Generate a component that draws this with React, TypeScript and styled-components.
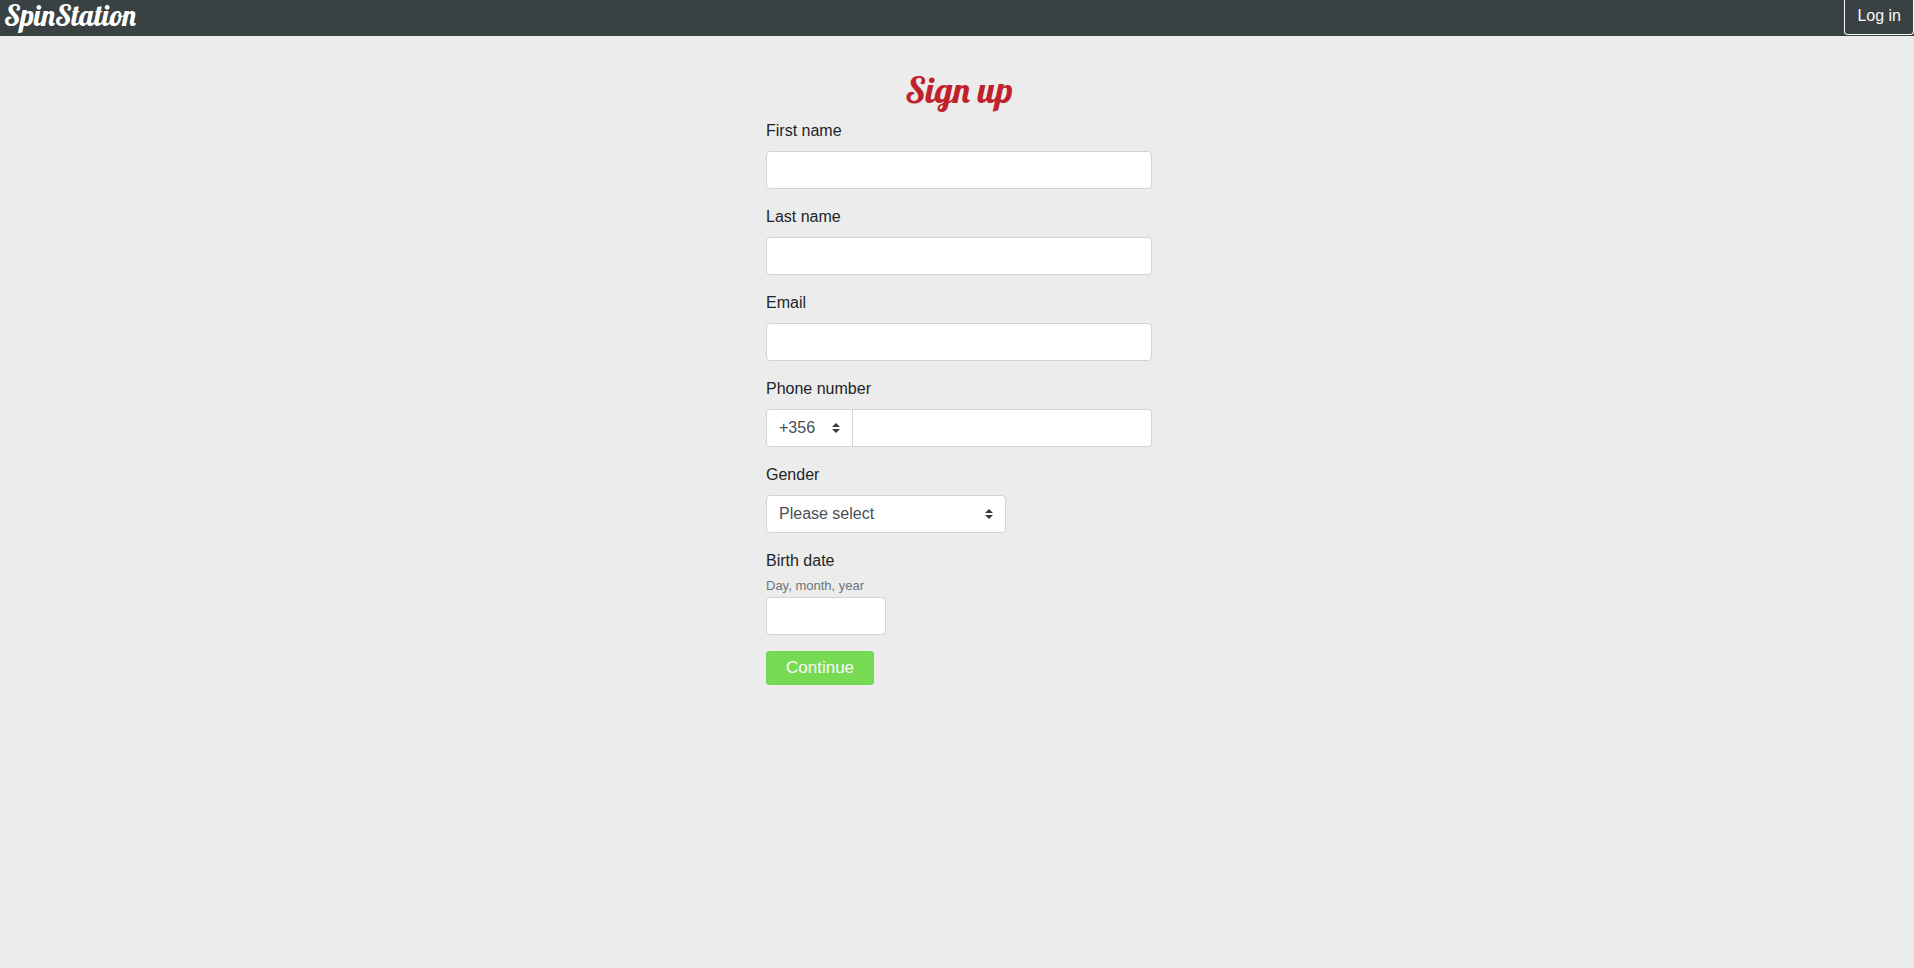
import React from "react";
import styled, { createGlobalStyle } from "styled-components";

const GlobalStyle = createGlobalStyle`
  *, *::before, *::after { box-sizing: border-box; }
  body {
    margin: 0;
    background: #ececec;
    color: #212529;
    font: 16px/24px "Liberation Sans", Arial, sans-serif;
  }
`;

const displayFont = `Lobster, "Liberation Serif", serif`;

const Header = styled.header`
  display: flex;
  justify-content: space-between;
  align-items: flex-start;
  height: 36px;
  padding-left: 4px;
  background: #394143;
`;

const Brand = styled.a`
  color: #fff;
  font: 29px/30px ${displayFont};
  text-decoration: none;
`;

const LoginButton = styled.button`
  height: 35px;
  padding: 4px 12px 6px;
  border: 1px solid #f8f9fa;
  border-top: 0;
  border-radius: 0 0 4px 4px;
  background: transparent;
  color: #f8f9fa;
  font: inherit;
  cursor: pointer;
`;

const Main = styled.main`
  padding: 32px 0 32px 4px;
`;

const Form = styled.form`
  width: 100%;
  max-width: 386px;
  margin: 0 auto;
`;

const Title = styled.h1`
  margin: 0 0 8px;
  color: #c0212a;
  font: 36px/43px ${displayFont};
  text-align: center;
`;

const Field = styled.div`
  margin-bottom: 16px;
`;

const Label = styled.label<{ $tight?: boolean }>`
  display: block;
  margin-bottom: ${(p) => (p.$tight ? 0 : 8)}px;
`;

const Hint = styled.small`
  color: #6c757d;
  font-size: 13px;
  line-height: 20px;
`;

const Input = styled.input<{ $width?: string }>`
  display: block;
  width: ${(p) => p.$width ?? "100%"};
  height: 38px;
  padding: 6px 12px;
  border: 1px solid #ced4da;
  border-radius: 4px;
  background: #fff;
  color: #495057;
  font: inherit;
`;

const SelectBox = styled.div<{ $width: number }>`
  display: grid;
  flex: none;
  width: ${(p) => p.$width}px;

  > * { grid-area: 1 / 1; }
`;

const Select = styled.select`
  appearance: none;
  width: 100%;
  height: 38px;
  padding: 6px 28px 6px 12px;
  border: 1px solid #ced4da;
  border-radius: 4px;
  background: #fff;
  color: #495057;
  font: inherit;
`;

const Arrows = styled.svg`
  align-self: center;
  justify-self: end;
  width: 8px;
  height: 10px;
  margin-right: 13px;
  fill: #343a40;
  pointer-events: none;
`;

const PhoneGroup = styled.div`
  display: flex;

  ${Select} { border-radius: 4px 0 0 4px; }
  ${Input} {
    flex: 1;
    min-width: 0;
    margin-left: -1px;
    border-radius: 0 4px 4px 0;
  }
`;

const SubmitButton = styled.button`
  height: 34px;
  padding: 0 20px;
  border: 0;
  border-radius: 3px;
  background: #77da53;
  color: #f8f9fa;
  font: inherit;
  font-size: 17px;
  cursor: pointer;
`;

function UpDown() {
  return (
    <Arrows viewBox="0 0 4 5" aria-hidden="true">
      <path d="M2 0L0 2h4zm0 5L0 3h4z" />
    </Arrows>
  );
}

const nameFields = [
  { id: "first-name", label: "First name", type: "text" },
  { id: "last-name", label: "Last name", type: "text" },
  { id: "email", label: "Email", type: "email" },
];

export default function App() {
  return (
    <>
      <GlobalStyle />
      <Header>
        <Brand href="#">SpinStation</Brand>
        <LoginButton type="button">Log in</LoginButton>
      </Header>
      <Main>
        <Form onSubmit={(e) => e.preventDefault()}>
          <Title>Sign up</Title>
          {nameFields.map((f) => (
            <Field key={f.id}>
              <Label htmlFor={f.id}>{f.label}</Label>
              <Input id={f.id} type={f.type} />
            </Field>
          ))}
          <Field>
            <Label htmlFor="phone">Phone number</Label>
            <PhoneGroup>
              <SelectBox $width={87}>
                <Select aria-label="Country code">
                  <option>+356</option>
                </Select>
                <UpDown />
              </SelectBox>
              <Input id="phone" type="tel" />
            </PhoneGroup>
          </Field>
          <Field>
            <Label htmlFor="gender">Gender</Label>
            <SelectBox $width={240}>
              <Select id="gender">
                <option>Please select</option>
                <option>Female</option>
                <option>Male</option>
              </Select>
              <UpDown />
            </SelectBox>
          </Field>
          <Field>
            <Label htmlFor="birth-date" $tight>Birth date</Label>
            <Hint id="birth-hint">Day, month, year</Hint>
            <Input id="birth-date" type="text" aria-describedby="birth-hint" $width="120px" />
          </Field>
          <SubmitButton type="submit">Continue</SubmitButton>
        </Form>
      </Main>
    </>
  );
}
